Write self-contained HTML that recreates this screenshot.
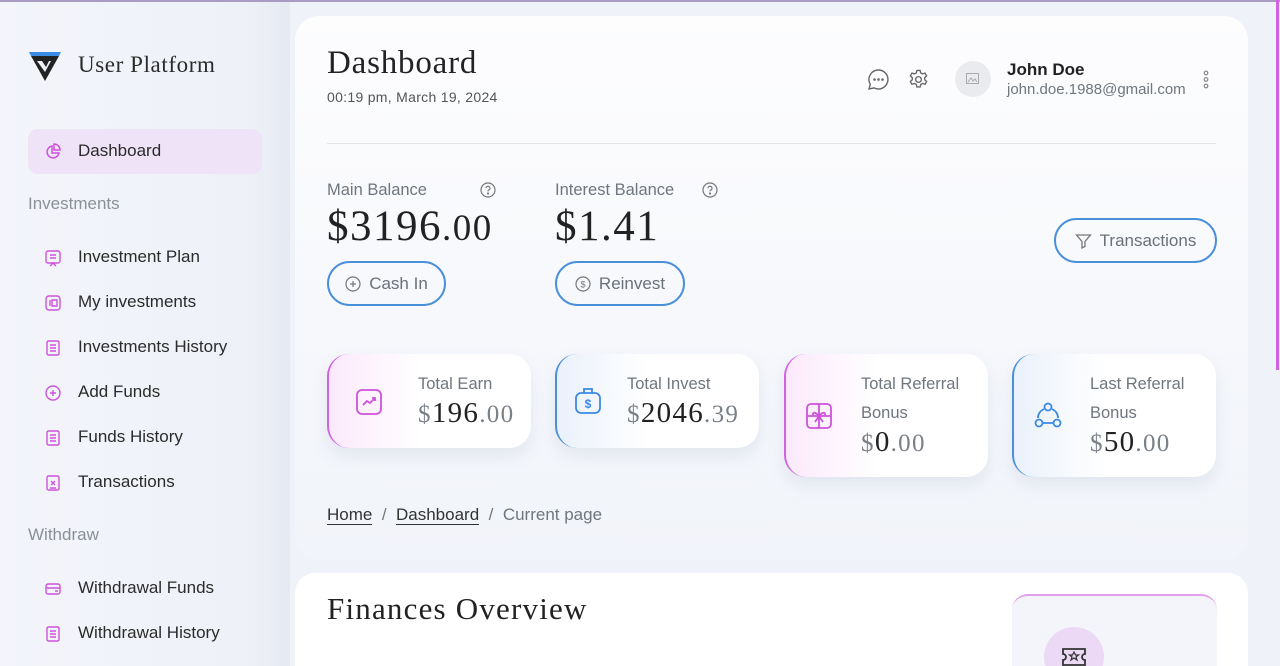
<!DOCTYPE html>
<html style="width:1280px;height:666px;overflow:hidden"><head><meta charset="utf-8"><style>
*{box-sizing:border-box;margin:0;padding:0}
body{width:1280px;height:666px;overflow:hidden;background:#eff2f9;font-family:"Liberation Sans",sans-serif;position:relative;color:#222}
.top{position:absolute;left:0;top:0;width:1280px;height:2px;background:#a89cc0}
.side{position:absolute;left:0;top:2px;width:290px;height:664px;background:linear-gradient(90deg,#f3f5fb,#eef1f8 85%,#e6e9f2)}
.logo{position:absolute;left:28px;top:50px}
.brand{position:absolute;left:78px;top:52px;font-family:"Liberation Serif",serif;font-size:23px;letter-spacing:.6px;color:#2a2a2a}
.act{position:absolute;left:28px;top:129px;width:234px;height:45px;border-radius:10px;background:#eee3f7}
.nav{position:absolute;left:78px;font-size:17px;color:#2b2b2b}
.sec{position:absolute;left:28px;font-size:17px;color:#8a9097}
.ic{position:absolute;left:44px}
.main{position:absolute;left:295px;top:16px;width:953px;height:544px;border-radius:24px;background:linear-gradient(180deg,#fdfdfe,#f1f4fa)}
.main2{position:absolute;left:295px;top:573px;width:953px;height:93px;border-radius:20px 20px 0 0;background:#fff}
.h1{position:absolute;left:327px;top:45px;font-family:"Liberation Serif",serif;font-size:33px;letter-spacing:.8px;color:#222}
.date{position:absolute;left:327px;top:89px;font-size:14px;letter-spacing:.3px;color:#555}
.hr{position:absolute;left:327px;top:143px;width:889px;height:1px;background:#e2e4e8}
.lbl{position:absolute;font-size:16.5px;color:#6f767e}
.big{position:absolute;font-family:"Liberation Serif",serif;font-size:43px;letter-spacing:1.5px;color:#222}
.btn{position:absolute;height:45px;border:2px solid #4a8fd9;border-radius:23px;font-size:17px;color:#6a7178;display:flex;align-items:center;justify-content:center;gap:8px}
.card{position:absolute;top:354px;width:204px;border-radius:22px;box-shadow:0 8px 16px rgba(150,160,190,.18)}
.card.p{border-left:2px solid #cf63e0;background:linear-gradient(90deg,#fbe9fb,#fff 45%)}
.card.b{border-left:2px solid #4a8fd9;background:linear-gradient(90deg,#eaf1fb,#fff 45%)}
.ct{position:absolute;font-size:16.5px;color:#6f767e;line-height:29px}
.cv{position:absolute;font-family:"Liberation Serif",serif;font-size:29px;letter-spacing:1.3px;color:#222}
.cv .g{color:#7a8088;font-size:25px}
.crumb{position:absolute;left:327px;top:505px;font-size:17px;color:#333}
.crumb u{text-decoration:none;border-bottom:1px solid #333}
.fin{position:absolute;left:327px;top:591px;font-family:"Liberation Serif",serif;font-size:31px;letter-spacing:1.2px;color:#222}
.fcard{position:absolute;left:1012px;top:594px;width:205px;height:80px;border-top:2px solid #e2a0ea;border-radius:16px 16px 0 0;background:#f3f5fb}
.circ{position:absolute;left:1044px;top:627px;width:60px;height:60px;border-radius:50%;background:#ecd9f6}
.scroll{position:absolute;left:1276px;top:0;width:3px;height:370px;background:#cf63e0}
</style></head><body>
<div class="top"></div>
<div class="side"></div>
<svg class="logo" width="34" height="32" viewBox="0 0 34 32"><path d="M1 2h32l-2 4H3z" fill="#3b8ae6"/><path d="M3 6h28L17 31z" fill="#222"/><path d="M9 11h14l-6 11z" fill="#eef1f8"/><path d="M14 11h7l-3 6z" fill="#222"/></svg>
<div class="brand">User Platform</div>
<div class="act"></div>
<svg class="ic" style="top:143px" width="18" height="18" viewBox="0 0 18 18" fill="none" stroke="#cf52dc" stroke-width="1.5"><path d="M8 3a6 6 0 1 0 7 7H8z"/><path d="M10 1v6h6a6 6 0 0 0-6-6z"/></svg>
<div class="nav" style="top:141px">Dashboard</div>
<div class="sec" style="top:194px">Investments</div>
<div class="nav" style="top:247px">Investment Plan</div>
<div class="nav" style="top:292px">My investments</div>
<div class="nav" style="top:337px">Investments History</div>
<div class="nav" style="top:382px">Add Funds</div>
<div class="nav" style="top:427px">Funds History</div>
<div class="nav" style="top:472px">Transactions</div>
<div class="sec" style="top:525px">Withdraw</div>
<div class="nav" style="top:578px">Withdrawal Funds</div>
<div class="nav" style="top:623px">Withdrawal History</div>
<svg class="ic" style="top:249px" width="18" height="18" viewBox="0 0 18 18" fill="none" stroke="#cf52dc" stroke-width="1.4"><rect x="2" y="2" width="14" height="12" rx="2"/><path d="M6 6h6M6 9h6M6 17l3-3 3 3"/></svg>
<svg class="ic" style="top:294px" width="18" height="18" viewBox="0 0 18 18" fill="none" stroke="#cf52dc" stroke-width="1.4"><rect x="2" y="2" width="14" height="14" rx="3"/><path d="M6 6v6M8 6h5v6H8z"/></svg>
<svg class="ic" style="top:339px" width="18" height="18" viewBox="0 0 18 18" fill="none" stroke="#cf52dc" stroke-width="1.4"><rect x="3" y="2" width="12" height="14" rx="1.5"/><path d="M6 6h6M6 9h6M6 12h6"/></svg>
<svg class="ic" style="top:384px" width="18" height="18" viewBox="0 0 18 18" fill="none" stroke="#cf52dc" stroke-width="1.4"><circle cx="9" cy="9" r="7"/><path d="M9 6v6M6 9h6"/></svg>
<svg class="ic" style="top:429px" width="18" height="18" viewBox="0 0 18 18" fill="none" stroke="#cf52dc" stroke-width="1.4"><rect x="3" y="2" width="12" height="14" rx="1.5"/><path d="M6 6h6M6 9h6M6 12h6"/></svg>
<svg class="ic" style="top:474px" width="18" height="18" viewBox="0 0 18 18" fill="none" stroke="#cf52dc" stroke-width="1.4"><rect x="3" y="2" width="12" height="14" rx="1.5"/><path d="M7 7l4 4M11 7l-4 4M6 14h6"/></svg>
<svg class="ic" style="top:580px" width="18" height="18" viewBox="0 0 18 18" fill="none" stroke="#cf52dc" stroke-width="1.4"><rect x="2" y="4" width="14" height="10" rx="2"/><path d="M2 8h14M11 11h3"/></svg>
<svg class="ic" style="top:625px" width="18" height="18" viewBox="0 0 18 18" fill="none" stroke="#cf52dc" stroke-width="1.4"><rect x="3" y="2" width="12" height="14" rx="1.5"/><path d="M6 6h6M6 9h6M6 12h6"/></svg>

<div class="main"></div>
<div class="main2"></div>
<div class="h1">Dashboard</div>
<div class="date">00:19 pm, March 19, 2024</div>
<svg style="position:absolute;left:867px;top:68px" width="23" height="23" viewBox="0 0 23 23" fill="none" stroke="#666" stroke-width="1.4"><path d="M11.5 2a9.5 9.5 0 1 1-4.5 17.9L2 21l1.3-4.6A9.5 9.5 0 0 1 11.5 2z"/><circle cx="7.5" cy="11.5" r=".6" fill="#666"/><circle cx="11.5" cy="11.5" r=".6" fill="#666"/><circle cx="15.5" cy="11.5" r=".6" fill="#666"/></svg>
<svg style="position:absolute;left:907px;top:68px" width="23" height="23" viewBox="0 0 24 24" fill="none" stroke="#666" stroke-width="1.4"><circle cx="12" cy="12" r="3"/><path d="M10.3 2.5h3.4l.6 2.6 2 1.1 2.5-.9 1.7 2.9-2 1.8v2.3l2 1.8-1.7 2.9-2.5-.9-2 1.1-.6 2.6h-3.4l-.6-2.6-2-1.1-2.5.9-1.7-2.9 2-1.8v-2.3l-2-1.8 1.7-2.9 2.5.9 2-1.1z"/></svg>
<div style="position:absolute;left:955px;top:61px;width:36px;height:36px;border-radius:50%;background:#e9ebee"></div>
<svg style="position:absolute;left:966px;top:73px" width="13" height="11" viewBox="0 0 13 11" fill="none" stroke="#aaa"><rect x=".5" y=".5" width="12" height="10"/><path d="M2 9l3-4 2 3 2-2 2 3"/></svg>
<div style="position:absolute;left:1007px;top:60px;font-size:17px;font-weight:bold;color:#222">John Doe</div>
<div style="position:absolute;left:1007px;top:81px;font-size:15px;color:#6f767e">john.doe.1988@gmail.com</div>
<svg style="position:absolute;left:1202px;top:70px" width="8" height="19" viewBox="0 0 8 19" fill="none" stroke="#888" stroke-width="1.2"><circle cx="4" cy="3" r="1.8"/><circle cx="4" cy="9.5" r="1.8"/><circle cx="4" cy="16" r="1.8"/></svg>
<div class="hr"></div>

<div class="lbl" style="left:327px;top:181px">Main Balance</div>
<svg style="position:absolute;left:480px;top:182px" width="16" height="16" viewBox="0 0 16 16" fill="none" stroke="#777" stroke-width="1.2"><circle cx="8" cy="8" r="7"/><path d="M6 6.3a2 2 0 1 1 2.5 1.9c-.4.2-.5.5-.5 1.2"/><circle cx="8" cy="11.5" r=".5" fill="#777"/></svg>
<div class="lbl" style="left:555px;top:181px">Interest Balance</div>
<svg style="position:absolute;left:702px;top:182px" width="16" height="16" viewBox="0 0 16 16" fill="none" stroke="#777" stroke-width="1.2"><circle cx="8" cy="8" r="7"/><path d="M6 6.3a2 2 0 1 1 2.5 1.9c-.4.2-.5.5-.5 1.2"/><circle cx="8" cy="11.5" r=".5" fill="#777"/></svg>
<div class="big" style="left:327px;top:202px">$3196<span style="font-size:37px">.00</span></div>
<div class="big" style="left:555px;top:202px">$1.41</div>
<div class="btn" style="left:327px;top:261px;width:119px"><svg width="16" height="16" viewBox="0 0 16 16" fill="none" stroke="#777" stroke-width="1.2"><circle cx="8" cy="8" r="7"/><path d="M8 5v6M5 8h6"/></svg>Cash In</div>
<div class="btn" style="left:555px;top:261px;width:130px"><svg width="16" height="16" viewBox="0 0 16 16" fill="none" stroke="#777" stroke-width="1.2"><circle cx="8" cy="8" r="7"/><text x="8" y="11.5" font-size="9" text-anchor="middle" fill="#777" stroke="none" font-family="Liberation Sans">$</text></svg>Reinvest</div>
<div class="btn" style="left:1054px;top:218px;width:163px"><svg width="17" height="16" viewBox="0 0 17 16" fill="none" stroke="#777" stroke-width="1.3"><path d="M1.5 2h14l-5.5 6.5v5l-3 1.5v-6.5z"/></svg>Transactions</div>

<div class="card p" style="left:327px;height:94px"></div>
<svg style="position:absolute;left:355px;top:388px" width="28" height="28" viewBox="0 0 28 28" fill="none" stroke="#cf52dc" stroke-width="1.8"><rect x="2" y="2" width="24" height="24" rx="5"/><path d="M8 17l4-4 3 2 5-5M17 10h3v3"/></svg>
<div class="ct" style="left:418px;top:370px">Total Earn</div>
<div class="cv" style="left:418px;top:397px"><span class="g">$</span>196<span class="g">.00</span></div>

<div class="card b" style="left:555px;height:94px"></div>
<svg style="position:absolute;left:574px;top:386px" width="28" height="30" viewBox="0 0 28 30" fill="none" stroke="#3b8ae6" stroke-width="1.8"><rect x="2" y="7" width="24" height="20" rx="5"/><path d="M10 7V3h8v4"/><text x="14" y="22" font-size="12" text-anchor="middle" fill="#3b8ae6" stroke="none" font-family="Liberation Sans" font-weight="bold">$</text></svg>
<div class="ct" style="left:627px;top:370px">Total Invest</div>
<div class="cv" style="left:627px;top:397px"><span class="g">$</span>2046<span class="g">.39</span></div>

<div class="card p" style="left:784px;height:123px"></div>
<svg style="position:absolute;left:805px;top:402px" width="28" height="28" viewBox="0 0 28 28" fill="none" stroke="#cf52dc" stroke-width="1.8"><rect x="2" y="2" width="24" height="24" rx="4"/><path d="M2 14h24M14 2v24M14 14c-5-6-8-2-5 0M14 14c5-6 8-2 5 0M10 20l4-6 4 6"/></svg>
<div class="ct" style="left:861px;top:370px">Total Referral<br>Bonus</div>
<div class="cv" style="left:861px;top:426px"><span class="g">$</span>0<span class="g">.00</span></div>

<div class="card b" style="left:1012px;height:123px"></div>
<svg style="position:absolute;left:1034px;top:402px" width="28" height="28" viewBox="0 0 28 28" fill="none" stroke="#3b8ae6" stroke-width="1.8"><circle cx="14" cy="5" r="3.5"/><circle cx="5" cy="21" r="3.5"/><circle cx="23" cy="21" r="3.5"/><path d="M9 21h10M4 16c0-4 2-7 6-9M24 16c0-4-2-7-6-9"/></svg>
<div class="ct" style="left:1090px;top:370px">Last Referral<br>Bonus</div>
<div class="cv" style="left:1090px;top:426px"><span class="g">$</span>50<span class="g">.00</span></div>

<div class="crumb"><u>Home</u> <span style="color:#777">&nbsp;/&nbsp;</span> <u>Dashboard</u> <span style="color:#777">&nbsp;/&nbsp;</span> <span style="color:#6f767e">Current page</span></div>
<div class="fin">Finances Overview</div>
<div class="fcard"></div>
<div class="circ"></div>
<svg style="position:absolute;left:1060px;top:645px" width="28" height="22" viewBox="0 0 28 22" fill="none" stroke="#333" stroke-width="1.8"><path d="M3 4h22v5a3 3 0 0 0 0 6v5H3v-5a3 3 0 0 0 0-6z"/><path d="M14 7l1.5 3h3l-2.5 2 1 3-3-2-3 2 1-3-2.5-2h3z" stroke-width="1.2"/></svg>
<div class="scroll"></div>
</body></html>
